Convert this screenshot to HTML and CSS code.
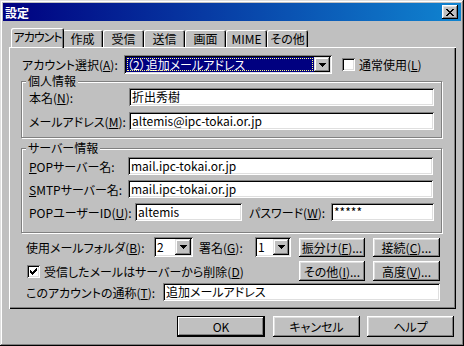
FILE: index.html
```html
<!DOCTYPE html>
<html lang="ja">

<head>
    <meta charset="UTF-8">
    <title>設定</title>
    <link rel="stylesheet" href="styles.css">
</head>

<body>
    <div class="window">
        <div class="titlebar">
            <span class="title">設定</span>
            <span class="close-btn">
                <svg width="8" height="7" viewBox="0 0 8 7" shape-rendering="crispEdges"><path d="M0 0h2v1H0zM6 0h2v1H6zM1 1h2v1H1zM5 1h2v1H5zM2 2h4v1H2zM3 3h2v1H3zM2 4h4v1H2zM1 5h2v1H1zM5 5h2v1H5zM0 6h2v1H0zM6 6h2v1H6z" fill="#000"/></svg>
            </span>
        </div>

        <div class="tabs">
            <div class="tab active">アカウント</div>
            <div class="tab">作成</div>
            <div class="tab">受信</div>
            <div class="tab">送信</div>
            <div class="tab">画面</div>
            <div class="tab">MIME</div>
            <div class="tab">その他</div>
        </div>

        <div class="panel">
            <div class="row account-row">
                <span class="label">アカウント選択(<u>A</u>):</span>
                <div class="select account-select">
                    <span class="value selected"><span class="focus">（2）追加メールアドレス</span></span>
                    <span class="drop"><svg width="7" height="4" viewBox="0 0 7 4" shape-rendering="crispEdges"><path d="M0 0h7v1H0zM1 1h5v1H1zM2 2h3v1H2zM3 3h1v1H3z" fill="#000"/></svg></span>
                </div>
                <span class="checkbox"></span>
                <span class="check-label">通常使用(<u>L</u>)</span>
            </div>

            <div class="group personal">
                <span class="legend">個人情報</span>
                <div class="field">
                    <span class="label">本名(<u>N</u>):</span>
                    <div class="input">折出秀樹</div>
                </div>
                <div class="field">
                    <span class="label">メールアドレス(<u>M</u>):</span>
                    <div class="input">altemis@ipc-tokai.or.jp</div>
                </div>
            </div>

            <div class="group server">
                <span class="legend">サーバー情報</span>
                <div class="field">
                    <span class="label srv"><u>P</u>OPサーバー名:</span>
                    <div class="input">mail.ipc-tokai.or.jp</div>
                </div>
                <div class="field">
                    <span class="label srv"><u>S</u>MTPサーバー名:</span>
                    <div class="input">mail.ipc-tokai.or.jp</div>
                </div>
                <div class="field">
                    <span class="label uid">POPユーザーID(<u>U</u>):</span>
                    <div class="input short">altemis</div>
                    <span class="label pw">パスワード(<u>W</u>):</span>
                    <div class="input pass">*****</div>
                </div>
            </div>

            <div class="row folder-row">
                <span class="label folder">使用メールフォルダ(<u>B</u>):</span>
                <div class="select small">
                    <span class="value">2</span>
                    <span class="drop"><svg width="7" height="4" viewBox="0 0 7 4" shape-rendering="crispEdges"><path d="M0 0h7v1H0zM1 1h5v1H1zM2 2h3v1H2zM3 3h1v1H3z" fill="#000"/></svg></span>
                </div>
                <span class="label sign">署名(<u>G</u>):</span>
                <div class="select smaller">
                    <span class="value">1</span>
                    <span class="drop"><svg width="7" height="4" viewBox="0 0 7 4" shape-rendering="crispEdges"><path d="M0 0h7v1H0zM1 1h5v1H1zM2 2h3v1H2zM3 3h1v1H3z" fill="#000"/></svg></span>
                </div>
                <div class="side-buttons">
                    <button class="btn">振分け(<u>F</u>)...</button>
                    <button class="btn">接続(<u>C</u>)...</button>
                </div>
            </div>

            <div class="row check-row">
                <span class="checkbox checked">
                    <svg width="7" height="7" viewBox="0 0 7 7" shape-rendering="crispEdges"><path d="M6 0h1v1H6zM5 1h2v1H5zM0 2h1v1H0zM4 2h3v1H4zM0 3h2v1H0zM3 3h3v1H3zM0 4h5v1H0zM1 5h3v1H1zM2 6h1v1H2z" fill="#000"/></svg>
                </span>
                <span class="check-label">受信したメールはサーバーから削除(<u>D</u>)</span>
                <div class="side-buttons">
                    <button class="btn">その他(<u>I</u>)...</button>
                    <button class="btn">高度(<u>V</u>)...</button>
                </div>
            </div>

            <div class="row alias-row">
                <span class="label alias">このアカウントの通称(<u>T</u>):</span>
                <div class="input alias-input">追加メールアドレス</div>
            </div>
        </div>

        <div class="dialog-buttons">
            <button class="btn default">OK</button>
            <button class="btn">キャンセル</button>
            <button class="btn">ヘルプ</button>
        </div>
    </div>
</body>

</html>
```

FILE: styles.css
```css
* {
    box-sizing: border-box;
}

body {
    margin: 0;
    background: #c0c0c0;
    font-family: "Noto Sans CJK JP", sans-serif;
    font-size: 12px;
    font-feature-settings: "palt" 1;
    color: #000;
}

u {
    text-decoration: underline;
    text-underline-offset: 1px;
}

.window {
    width: 464px;
    height: 346px;
    padding: 3px;
    background: #c0c0c0;
    box-shadow: inset -1px -1px #000, inset 1px 1px #dfdfdf, inset -2px -2px #808080, inset 2px 2px #fff;
}

.titlebar {
    height: 18px;
    display: flex;
    align-items: center;
    justify-content: space-between;
    padding: 0 3px 0 2px;
    background: linear-gradient(to right, #000080, #1084d0);
    color: #fff;
    font-weight: bold;
}

.close-btn {
    width: 16px;
    height: 14px;
    display: flex;
    align-items: center;
    justify-content: center;
    background: #c0c0c0;
    box-shadow: inset -1px -1px #000, inset 1px 1px #fff, inset -2px -2px #808080, inset 2px 2px #dfdfdf;
}

/* tab strip */
.tabs {
    display: flex;
    align-items: flex-end;
    height: 19px;
    margin: 7px 0 0 10px;
}

.tab {
    width: 41px;
    height: 17px;
    line-height: 17px;
    text-align: center;
    white-space: nowrap;
    border-radius: 2px 2px 0 0;
    box-shadow: inset 1px 1px #fff, inset -1px 0 #000, inset -2px 0 #808080;
}

.tab.active {
    position: relative;
    z-index: 1;
    width: 53px;
    height: 20px;
    margin: 0 -2px -1px;
    line-height: 18px;
    letter-spacing: -1px;
}

/* page */
.panel {
    width: 447px;
    height: 262px;
    margin-left: 6px;
    padding: 8px 16px 0 12px;
    box-shadow: inset 1px 1px #fff, inset -1px -1px #000, inset -2px -2px #808080;
}

.row {
    display: flex;
    align-items: center;
}

.account-row {
    height: 19px;
}

.account-row .label {
    width: 103px;
    padding-left: 1px;
}

.input,
.select {
    background: #fff;
    box-shadow: inset 1px 1px #808080, inset -1px -1px #fff, inset 2px 2px #000, inset -2px -2px #dfdfdf;
}

.input {
    height: 18px;
    padding: 0 3px;
    line-height: 18px;
    white-space: nowrap;
    overflow: hidden;
}

.select {
    display: flex;
    height: 20px;
    padding: 2px;
}

.select .value {
    flex: 1;
    padding-left: 1px;
    line-height: 16px;
}

.drop {
    width: 16px;
    height: 16px;
    display: flex;
    align-items: center;
    justify-content: center;
    background: #c0c0c0;
    box-shadow: inset -1px -1px #000, inset 1px 1px #dfdfdf, inset -2px -2px #808080, inset 2px 2px #fff;
}

.account-select {
    width: 208px;
    height: 19px;
}

.account-select .drop {
    height: 15px;
}

.selected {
    padding: 1px;
    background: #000080;
    color: #fff;
}

.selected .focus {
    display: block;
    height: 13px;
    line-height: 13px;
    outline: 1px dotted #ffff80;
    outline-offset: -1px;
}

.checkbox {
    width: 13px;
    height: 13px;
    display: flex;
    align-items: center;
    justify-content: center;
    background: #fff;
    box-shadow: inset 1px 1px #808080, inset -1px -1px #fff, inset 2px 2px #000, inset -2px -2px #dfdfdf;
}

.account-row .checkbox {
    margin-left: 10px;
}

.check-label {
    margin-left: 4px;
}

/* group boxes */
.group {
    position: relative;
    width: 421px;
    border: 1px solid #808080;
    box-shadow: inset 1px 1px #fff, 1px 1px #fff;
}

.legend {
    position: absolute;
    top: -8px;
    left: 4px;
    padding: 0 2px;
    line-height: 14px;
    background: #c0c0c0;
}

.personal {
    height: 57px;
    margin-top: 7px;
    padding: 6px 0 0 7px;
}

.server {
    height: 85px;
    margin-top: 10px;
    padding: 8px 0 0 7px;
}

.field {
    display: flex;
    align-items: center;
    height: 18px;
}

.personal .field + .field {
    margin-top: 6px;
}

.server .field + .field {
    margin-top: 5px;
}

.field .label {
    width: 100px;
}

.field .input {
    width: 305px;
}

.field .label.srv {
    width: 99px;
}

.field .input.short {
    width: 107px;
}

.field .label.uid {
    width: 106px;
}

.field .label.pw {
    width: 82px;
    margin-left: 7px;
}

.field .input.pass {
    width: 103px;
}

/* lower rows */
.folder-row {
    height: 20px;
    margin-top: 4px;
    padding-left: 5px;
}

.label.folder {
    width: 128px;
}

.select.small {
    width: 39px;
}

.select.smaller {
    width: 36px;
}

.label.sign {
    width: 56px;
    margin-left: 6px;
}

.side-buttons {
    display: flex;
    gap: 8px;
    margin-left: auto;
}

.side-buttons .btn {
    width: 66px;
    height: 19px;
}

.side-buttons .btn + .btn {
    width: 67px;
}

.check-row {
    height: 20px;
    margin-top: 4px;
}

.check-row .checkbox {
    margin-left: 6px;
}

.check-row .side-buttons .btn {
    height: 20px;
}

.alias-row {
    height: 18px;
    margin-top: 2px;
    padding-left: 5px;
}

.label.alias {
    width: 137px;
}

.alias-input {
    width: 277px;
}

/* buttons */
.btn {
    height: 21px;
    padding: 0;
    border: none;
    background: #c0c0c0;
    font: inherit;
    color: #000;
    box-shadow: inset -1px -1px #000, inset 1px 1px #fff, inset -2px -2px #808080, inset 2px 2px #dfdfdf;
}

.btn.default {
    box-shadow: inset 0 0 0 1px #000, inset -2px -2px #000, inset 2px 2px #fff, inset -3px -3px #808080;
}

.dialog-buttons {
    display: flex;
    justify-content: flex-end;
    gap: 7px;
    margin-top: 7px;
    padding-right: 7px;
}

.dialog-buttons .btn {
    width: 87px;
}

.dialog-buttons .btn.default {
    width: 88px;
    margin-right: 1px;
}
```
